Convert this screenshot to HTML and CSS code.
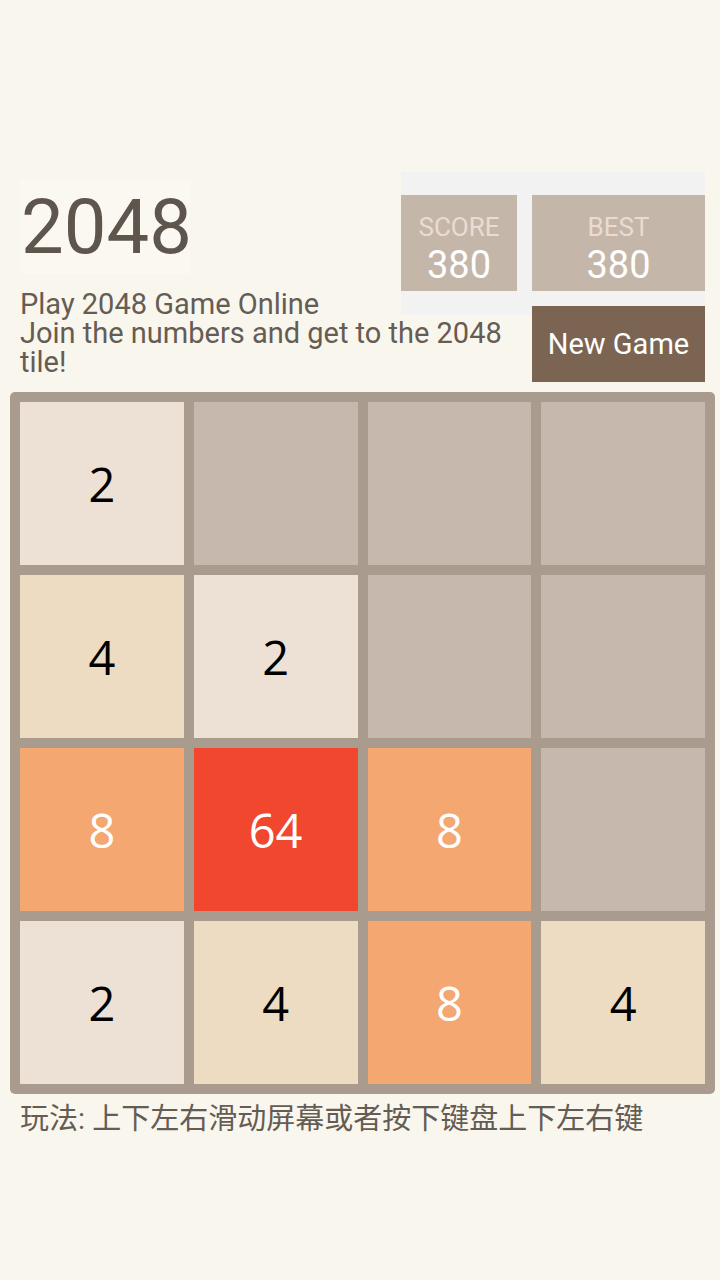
FILE: index.html
```html
<!DOCTYPE html>
<html>
<head>
<meta charset="utf-8">
<title>2048</title>
<link rel="stylesheet" href="styles.css">
</head>
<body>
<div class="header">
  <div class="title">2048</div>
  <div class="scores">
    <div class="score-box score">
      <div class="label">SCORE</div>
      <div class="value">380</div>
    </div>
    <div class="score-box best">
      <div class="label">BEST</div>
      <div class="value">380</div>
    </div>
  </div>
  <p class="intro">Play 2048 Game Online<br>Join the numbers and get to the 2048 tile!</p>
  <div class="new-game">New Game</div>
</div>
<div class="board">
  <div class="tile t2"><span>2</span></div>
  <div class="tile empty"></div>
  <div class="tile empty"></div>
  <div class="tile empty"></div>
  <div class="tile t4"><span>4</span></div>
  <div class="tile t2"><span>2</span></div>
  <div class="tile empty"></div>
  <div class="tile empty"></div>
  <div class="tile t8"><span>8</span></div>
  <div class="tile t64"><span>64</span></div>
  <div class="tile t8"><span>8</span></div>
  <div class="tile empty"></div>
  <div class="tile t2"><span>2</span></div>
  <div class="tile t4"><span>4</span></div>
  <div class="tile t8"><span>8</span></div>
  <div class="tile t4"><span>4</span></div>
</div>
<p class="footer">玩法: 上下左右滑动屏幕或者按下键盘上下左右键</p>
</body>
</html>
```
FILE: styles.css
```css
html, body {
  margin: 0;
  padding: 0;
  background: #f9f6ee;
}
body {
  font-family: Roboto, "Noto Sans CJK SC", sans-serif;
  color: #655c53;
  width: 720px;
  height: 1280px;
  overflow: hidden;
}
.header {
  margin: 172px 15px 0 20px;
  display: grid;
  grid-template-columns: 381px 130px 174px;
  grid-template-rows: 118px 29px auto;
}
.title {
  grid-column: 1;
  grid-row: 1;
  align-self: start;
  margin-top: 8px;
  width: 170px;
  height: 94px;
  line-height: 94px;
  font-size: 76px;
  color: #5e564d;
  background: #fbf8f2;
  padding-left: 1px;
  box-sizing: border-box;
}
.scores {
  grid-column: 2 / 4;
  grid-row: 1 / 3;
  align-self: start;
  height: 143px;
  background: #f2f2f2;
  box-sizing: border-box;
  padding-top: 23px;
  display: flex;
  gap: 15px;
}
.score-box {
  height: 96px;
  background: #c5b6aa;
  box-sizing: border-box;
  padding-top: 16px;
  text-align: center;
}
.score { width: 116px; }
.best { flex: 1; }
.label {
  font-size: 26px;
  line-height: 32px;
  color: #ebdccf;
}
.value {
  font-size: 38px;
  line-height: 42px;
  margin-top: 1px;
  color: #ffffff;
}
.intro {
  grid-column: 1 / 3;
  grid-row: 2 / 4;
  margin: 0;
  padding-right: 6px;
  font-size: 29px;
  line-height: 29px;
  color: #655c53;
}
.new-game {
  grid-column: 3;
  grid-row: 3;
  align-self: start;
  margin-top: -13px;
  margin-left: 1px;
  height: 76px;
  background: #7b6552;
  color: #ffffff;
  font-size: 29px;
  display: flex;
  align-items: center;
  justify-content: center;
}
.board {
  margin: 10px 0 0 10px;
  width: 705px;
  height: 702px;
  box-sizing: border-box;
  padding: 10px;
  background: #a99b8d;
  border-radius: 5px;
  display: grid;
  grid-template-columns: repeat(4, 1fr);
  grid-template-rows: repeat(4, 1fr);
  gap: 10px;
}
.tile {
  display: flex;
  align-items: center;
  justify-content: center;
  font-family: "Open Sans", sans-serif;
  font-size: 47px;
  color: #000000;
}
.empty { background: #c6b8ac; }
.t2 { background: #ede1d5; }
.t4 { background: #eddcc2; }
.t8 { background: #f4a771; color: #ffffff; }
.t64 { background: #f1472f; color: #ffffff; }
.footer {
  margin: 5px 0 0 20px;
  font-size: 29px;
  line-height: 40px;
  color: #655c53;
}
```
